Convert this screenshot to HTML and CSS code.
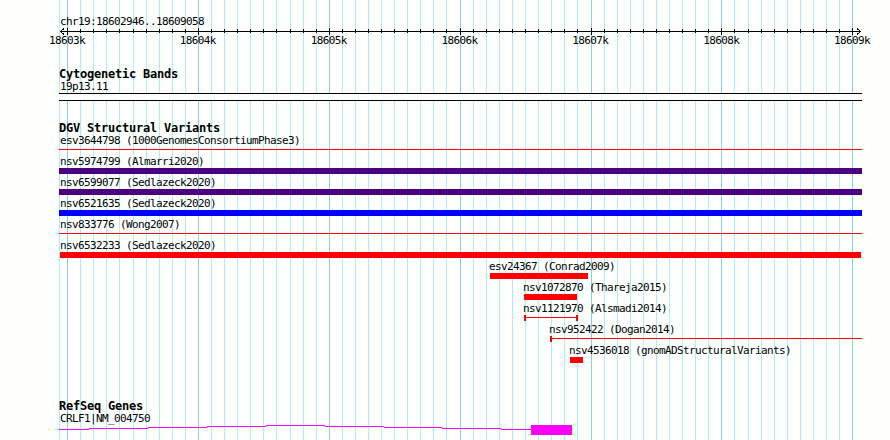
FILE: index.html
```
<!DOCTYPE html>
<html lang="en">
<head>
<meta charset="utf-8">
<title>chr19:18602946..18609058</title>
<link rel="stylesheet" href="styles.css">
</head>
<body>
<svg class="grid" width="890" height="440" aria-hidden="true"><path id="minor" class="minor"/><path id="major" class="major"/></svg>
<main class="browser">
<header class="ruler">
<div class="region">chr19:18602946..18609058</div>
<svg class="axis" width="804" height="9" viewBox="59 27 804 9"><path d="M60 31.5H861M64 28.5L60.5 31.5L64 34.5M857 28.5L860.5 31.5L857 34.5"/><path id="ticks"/></svg>
<div class="scale"><span>18603k</span><span>18604k</span><span>18605k</span><span>18606k</span><span>18607k</span><span>18608k</span><span>18609k</span></div>
</header>
<section class="track bands"><h2>Cytogenetic Bands</h2><div class="label">19p13.11</div><div class="band"></div></section>
<section class="track variants"><h2>DGV Structural Variants</h2><div id="variants"></div></section>
<section class="track genes"><h2>RefSeq Genes</h2><div class="label">CRLF1|NM_004750</div>
<svg class="gene" width="804" height="10" viewBox="59 425 804 10"><path d="M59 429h30v1h-30zM89 428h59v1h-59zM148 427h59v1h-59zM207 426h59v1h-59zM266 425h59v1h-59zM325 426h59v1h-59zM384 427h58v1h-58zM442 428h59v1h-59zM501 429h30v1h-30zM531 425h41v10h-41z"/></svg>
</section>
</main>
<script src="app.js"></script>
</body>
</html>
```
FILE: styles.css
```
body { margin: 0; background: #fcfffc; color: #000; }
.grid { position: absolute; top: 0; left: 0; z-index: -1; }
.minor { fill: #afeeee; }
.major { fill: #87ceeb; }
.browser {
  box-sizing: border-box;
  width: 890px;
  height: 440px;
  padding: 13px 0 0 59px;
  overflow: hidden;
  font: 11px/17px "DejaVu Sans Mono", monospace;
  letter-spacing: -0.622px;
  white-space: pre;
}
.browser, .ruler, .track { display: flex; flex-direction: column; }
.ruler { height: 54px; }
.region { height: 14px; padding-left: 1px; }
.axis { display: block; fill: none; stroke: #000; shape-rendering: crispEdges; }
.scale { display: flex; justify-content: space-between; width: 821px; margin: -4px 0 0 -10px; }
.scale span { width: 36px; }
h2 { margin: 0; font-size: 12px; line-height: 14px; letter-spacing: -0.224px; height: 11px; }
.label { height: 15px; padding-left: 1px; }
.bands { height: 54px; }
.band { width: 803px; height: 8px; box-sizing: border-box; border: solid #000; border-width: 1px 0; background: #fcfffc; }
.variants { height: 278px; }
.feature { height: 21px; }
.name { height: 15px; }
.bar { height: 6px; }
.line { display: flex; justify-content: space-between; background-repeat: no-repeat; background-position: 0 2px; background-size: 100% 1px; }
.cap { width: 2px; height: 6px; background: #f00; }
.purple { background-color: #4b0082; }
.blue { background-color: #00f; }
.red { background-color: #f00; }
.line-red { background-image: linear-gradient(#f00, #f00); }
.gene { display: block; fill: #f0f; shape-rendering: crispEdges; }
```
FILE: app.js
```
const major = [67, 198, 329, 460, 591, 721, 852];
const minor = [59, 80, 93, 106, 119, 133, 146, 159, 172, 185, 211, 224, 237, 250, 263, 276, 290, 303, 316, 342, 355, 368, 381, 394, 407, 420, 433, 446, 473, 486, 499, 512, 525, 538, 551, 564, 577, 604, 617, 630, 643, 656, 669, 682, 695, 708, 734, 748, 761, 774, 787, 800, 813, 826, 839];
const lines = (xs, y, h) => xs.map(x => `M${x} ${y}h1v${h}h-1z`).join('');
document.getElementById('minor').setAttribute('d', lines(minor, 0, 440));
document.getElementById('major').setAttribute('d', lines(major, 0, 440));
document.getElementById('ticks').setAttribute('d',
  minor.slice(1).map(x => `M${x + 0.5} 29V33`).join('') + major.map(x => `M${x + 0.5} 28V35`).join(''));

// name, label x, start, end, style, left cap, right cap
const variants = [
  ['esv3644798 (1000GenomesConsortiumPhase3)', 60, 59, 862, 'line line-red'],
  ['nsv5974799 (Almarri2020)', 60, 59, 862, 'purple'],
  ['nsv6599077 (Sedlazeck2020)', 60, 59, 862, 'purple'],
  ['nsv6521635 (Sedlazeck2020)', 60, 59, 862, 'blue'],
  ['nsv833776 (Wong2007)', 60, 59, 862, 'line line-red'],
  ['nsv6532233 (Sedlazeck2020)', 60, 60, 861, 'red'],
  ['esv24367 (Conrad2009)', 489, 490, 588, 'red'],
  ['nsv1072870 (Thareja2015)', 523, 524, 577, 'red'],
  ['nsv1121970 (Alsmadi2014)', 523, 524, 578, 'line line-red', 1, 1],
  ['nsv952422 (Dogan2014)', 549, 550, 862, 'line line-red', 1, 0],
  ['nsv4536018 (gnomADStructuralVariants)', 569, 570, 583, 'red'],
];
document.getElementById('variants').innerHTML = variants.map(([name, x, start, end, style, left, right]) =>
  `<div class="feature"><div class="name" style="margin-left:${x - 59}px">${name}</div>` +
  `<div class="bar ${style}" style="margin-left:${start - 59}px;width:${end - start}px">` +
  `${left ? '<i class="cap"></i>' : ''}${right ? '<i class="cap"></i>' : ''}</div></div>`).join('');
```
